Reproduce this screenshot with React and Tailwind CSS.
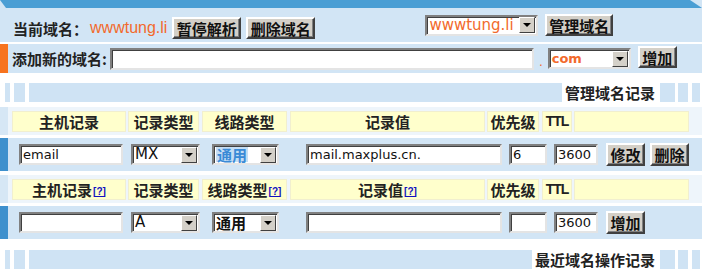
const CJK = "font-['Noto_Sans_CJK_SC',sans-serif]";
const LAT = "font-['DejaVu_Sans','Noto_Sans_CJK_SC',sans-serif]";

function Btn({ children, className = "" }) {
  return (
    <button
      className={`h-[22px] bg-[#d4d0c8] border-2 border-t-white border-l-white border-r-[#404040] border-b-[#404040] shadow-[inset_-1px_-1px_0_#808080] text-[15px] font-bold leading-none text-[#111] flex items-center justify-center ${CJK} ${className}`}
    >
      {children}
    </button>
  );
}

function Input({ value = "", className = "" }) {
  return (
    <div
      className={`h-[21px] bg-white border-2 border-t-[#808080] border-l-[#808080] border-r-[#e4e4e4] border-b-[#e4e4e4] shadow-[inset_1px_1px_0_#404040] flex items-center pl-[2px] text-[13px] leading-none text-[#111] ${LAT} ${className}`}
    >
      {value}
    </div>
  );
}

function Arrow() {
  return (
    <div className="w-[16px] h-[16px] bg-[#d4d0c8] border border-t-white border-l-white border-r-[#404040] border-b-[#404040] flex items-center justify-center">
      <span className="w-0 h-0 border-l-[4px] border-r-[4px] border-t-[4px] border-l-transparent border-r-transparent border-t-black" />
    </div>
  );
}

function Select({ children, className = "", textClass = "" }) {
  return (
    <div
      className={`h-[21px] bg-white border-2 border-t-[#808080] border-l-[#808080] border-r-[#e4e4e4] border-b-[#e4e4e4] shadow-[inset_1px_1px_0_#404040] flex items-center justify-between pl-[2px] pr-[1px] ${className}`}
    >
      <span className={`leading-none ${textClass}`}>{children}</span>
      <Arrow />
    </div>
  );
}

function SectionBar({ title, textWidth }) {
  return (
    <div className="flex h-[19px]">
      <div className="w-[5px]" />
      <div className="w-[5px] bg-[#cfe3f4]" />
      <div className="w-[4px]" />
      <div className="w-[11px] bg-[#cfe3f4]" />
      <div className="w-[4px]" />
      <div className="flex-1 bg-[#cfe3f4]" />
      <div
        className={`${textWidth} flex items-center justify-end pr-[3px] text-[15px] font-bold leading-none text-[#222] ${CJK}`}
      >
        {title}
      </div>
      <div className="w-[2px]" />
      <div className="w-[15px] bg-[#cfe3f4]" />
      <div className="w-[3px]" />
      <div className="w-[10px] bg-[#cfe3f4]" />
      <div className="w-[4px]" />
      <div className="w-[8px] bg-[#cfe3f4]" />
      <div className="w-[2px]" />
    </div>
  );
}

function Help() {
  return (
    <span className="text-[10px] leading-none text-[#1010c0] underline font-bold self-end mb-[2px] ml-[1px] font-['Liberation_Sans',sans-serif]">
      [?]
    </span>
  );
}

const CELLS = [
  { label: "主机记录", cls: "ml-[4px] w-[114px]", help: true },
  { label: "记录类型", cls: "ml-[2px] w-[71px]" },
  { label: "线路类型", cls: "ml-[3px] w-[85px]", help: true },
  { label: "记录值", cls: "ml-[3px] w-[195px]", help: true },
  { label: "优先级", cls: "ml-[2px] w-[52px]" },
  { label: "TTL", cls: "ml-[3px] w-[30px]", latin: true },
  { label: "", cls: "ml-[2px] w-[115px]" },
];

function HeaderRow({ helps }) {
  return (
    <div className="flex h-[28px]">
      <div className="w-[8px] bg-[#d6e7f5]" />
      <div className="flex-1 flex items-center bg-[#eef5fb]">
        {CELLS.map((c, i) => (
          <div
            key={i}
            className={`${c.cls} h-[21px] bg-[#ffffcc] border border-[#f1efcf] flex items-center justify-center`}
          >
            <span
              className={`font-bold leading-none text-[#222] ${
                c.latin ? "text-[14px] tracking-[-1px] font-['Liberation_Sans',sans-serif]" : `text-[15px] ${CJK}`
              }`}
            >
              {c.label}
            </span>
            {helps && c.help && <Help />}
          </div>
        ))}
      </div>
    </div>
  );
}

function DataRow({ host, type, line, lineSelected, value, prio, ttl, actions }) {
  return (
    <div className="flex h-[33px]">
      <div className="w-[8px] bg-[#3e90cd]" />
      <div className="flex-1 bg-[#d2e5f5] flex items-center pl-[11px]">
        <Input value={host} className="w-[104px]" />
        <Select className="ml-[8px] w-[69px]" textClass={`text-[15px] text-[#111] ${LAT}`}>
          {type}
        </Select>
        <Select
          className="ml-[12px] w-[67px]"
          textClass={`text-[15px] font-bold ${CJK} ${
            lineSelected ? "bg-[#c5def4] text-[#3a8ad6] px-[1px]" : "text-[#111]"
          }`}
        >
          {line}
        </Select>
        <Input value={value} className="ml-[27px] w-[196px]" />
        <Input value={prio} className="ml-[7px] w-[38px]" />
        <Input value={ttl} className="ml-[7px] w-[44px]" />
        {actions.map((a, i) => (
          <Btn key={a} className={`${i === 0 ? "ml-[8px]" : "ml-[5px]"} w-[39px] h-[23px]`}>
            {a}
          </Btn>
        ))}
      </div>
    </div>
  );
}

export default function App() {
  return (
    <div className="w-[702px] h-[269px] bg-white overflow-hidden">
      {/* top strip */}
      <div className="h-[8px] bg-[#d2e5f5]">
        <div className="h-full bg-[#4a9ed4] [clip-path:polygon(0_0,calc(100%-12px)_0,100%_100%,6px_100%)]" />
      </div>

      {/* current domain */}
      <div className="h-[34px] bg-[#d2e5f5] flex items-center pl-[13px]">
        <div className="flex items-center pt-[6px]">
          <span className={`text-[15px] font-bold leading-none text-[#222] ${CJK}`}>当前域名：</span>
          <span className="ml-[2px] text-[16px] leading-none text-[#f26a2c] font-['Liberation_Sans',sans-serif]">
            wwwtung.li
          </span>
          <Btn className="ml-[5px] w-[69px]">暂停解析</Btn>
          <Btn className="ml-[5px] w-[69px]">删除域名</Btn>
        </div>
        <Select className="ml-[110px] w-[113px]" textClass={`text-[15px] text-[#f26a2c] ${LAT}`}>
          wwwtung.li
        </Select>
        <Btn className="ml-[7px] w-[68px]">管理域名</Btn>
      </div>

      <div className="h-[2px]" />

      {/* add domain */}
      <div className="flex h-[29px]">
        <div className="w-[8px] bg-[#f7731e]" />
        <div className="flex-1 bg-[#d2e5f5] flex items-center pl-[4px]">
          <span className={`text-[15px] font-bold leading-none text-[#222] ${CJK}`}>添加新的域名:</span>
          <Input className="ml-[3px] w-[424px] h-[22px]" />
          <span className={`ml-[5px] mt-[6px] text-[12px] leading-none text-[#f26a2c] ${LAT}`}>.</span>
          <Select className="ml-[5px] w-[83px]" textClass={`text-[13px] font-bold text-[#f26a2c] ${LAT}`}>
            com
          </Select>
          <Btn className="ml-[7px] w-[39px] mb-[3px]">增加</Btn>
        </div>
      </div>

      <div className="h-[10px]" />
      <SectionBar title="管理域名记录" textWidth="w-[96px] bg-white" />
      <div className="h-[5px]" />

      <HeaderRow />
      <div className="h-[3px]" />
      <DataRow
        host="email"
        type="MX"
        line="通用"
        lineSelected
        value="mail.maxplus.cn."
        prio="6"
        ttl="3600"
        actions={["修改", "删除"]}
      />
      <div className="h-[4px]" />
      <HeaderRow helps />
      <div className="h-[3px]" />
      <DataRow host="" type="A" line="通用" value="" prio="" ttl="3600" actions={["增加"]} />

      <div className="h-[11px]" />
      <SectionBar title="最近域名操作记录" textWidth="w-[126px] bg-white" />
    </div>
  );
}
